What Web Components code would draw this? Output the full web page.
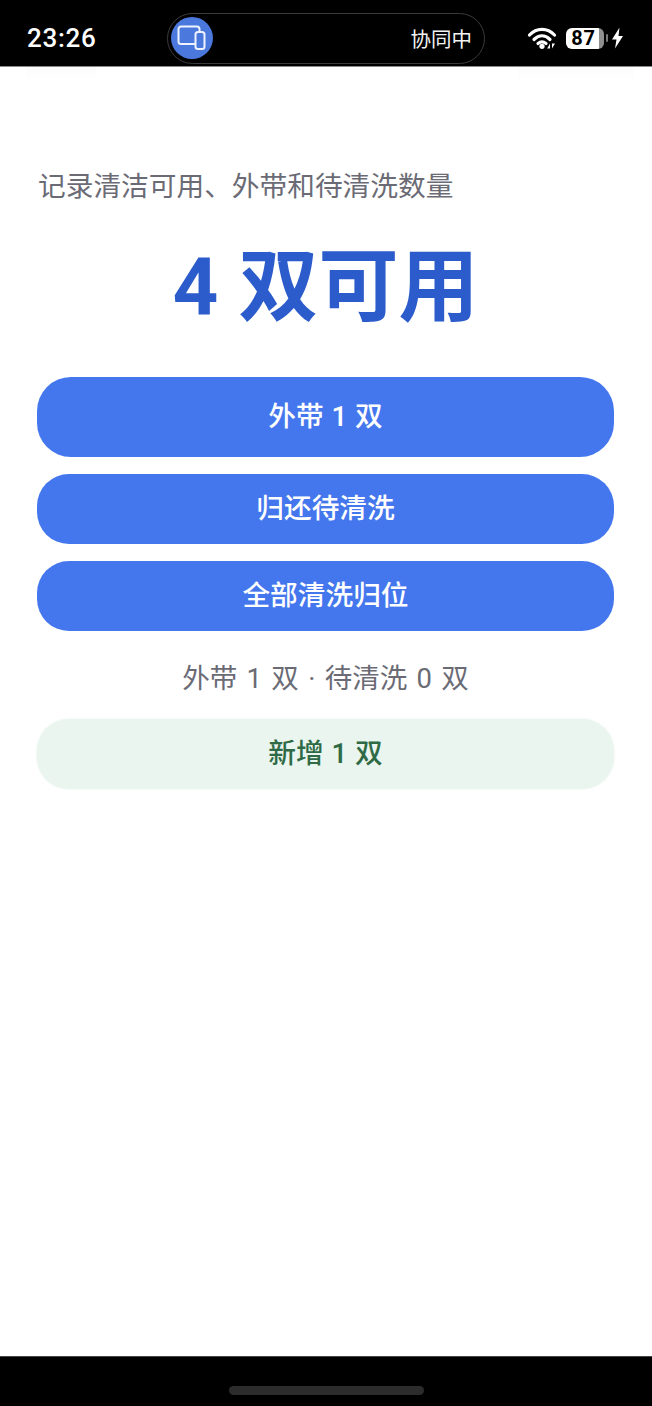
<!DOCTYPE html>
<html lang="zh">
<head>
<meta charset="utf-8">
<title>记录</title>
<style>
  html, body { margin: 0; padding: 0; height: 100%; background: #fff; }
  body { font-family: Roboto, "Noto Sans CJK SC", sans-serif; }
</style>
</head>
<body>
<phone-screen>
  <status-bar slot="top"></status-bar>
  <counter-panel>
    <p-note>记录清洁可用、外带和待清洗数量</p-note>
    <big-count>4 双可用</big-count>
    <pill-button tall>外带 1 双</pill-button>
    <pill-button>归还待清洗</pill-button>
    <pill-button>全部清洗归位</pill-button>
    <p-summary>外带 1 双 · 待清洗 0 双</p-summary>
    <pill-button soft>新增 1 双</pill-button>
  </counter-panel>
  <home-bar slot="bottom"></home-bar>
</phone-screen>

<script>
class PhoneScreen extends HTMLElement {
  constructor() {
    super();
    this.attachShadow({ mode: 'open' }).innerHTML = `
      <style>
        :host { display: flex; flex-direction: column; height: 1406px; background: #fff; overflow: hidden; }
        main { flex: 1; min-height: 0; position: relative; overflow: hidden; }
        .haze { position: absolute; top: 0; height: 14px; background: linear-gradient(#fbfbfc, #fff); }
        .left { left: 26px; width: 70px; }
        .right { left: 518px; width: 116px; }
      </style>
      <slot name="top"></slot>
      <main>
        <div class="haze left"></div>
        <div class="haze right"></div>
        <slot></slot>
      </main>
      <slot name="bottom"></slot>
    `;
  }
}

class StatusBar extends HTMLElement {
  constructor() {
    super();
    this.attachShadow({ mode: 'open' }).innerHTML = `
      <style>
        :host { display: flex; align-items: center; height: 67px; background: #000; color: #fff; border-bottom: 1px solid #8a8a8a; box-sizing: border-box; padding: 10px 0 0 27px; }
        .time { width: 140px; font: 500 26px/1 Roboto, "Noto Sans", sans-serif; letter-spacing: .7px; white-space: nowrap; }
        .capsule { width: 318px; height: 51px; box-sizing: border-box; border: 1px solid #3b3b3b; border-radius: 26px; display: flex; align-items: center; justify-content: space-between; padding: 0 12px 0 3px; }
        .dot { width: 42px; height: 42px; border-radius: 50%; background: #4a78dc; display: flex; align-items: center; justify-content: center; }
        .label { font: 400 20.500px/1 "Noto Sans CJK SC", sans-serif; color: #f2f2f2; white-space: nowrap; }
        .right { display: flex; align-items: center; margin-left: 42px; }
        .batt { width: 38px; height: 21px; border-radius: 6px; background: linear-gradient(90deg, #fff 0 86%, #8f8f8f 86%); color: #000; font: 700 20px/21px Roboto, sans-serif; letter-spacing: .8px; text-align: center; margin-left: 8px; padding-right: 3px; box-sizing: border-box; }
        .nub { width: 2px; height: 8px; background: #777; margin-left: 2px; border-radius: 1px; }
      </style>
      <span class="time">23:26</span>
      <div class="capsule">
        <span class="dot">
          <svg width="30" height="28" viewBox="0 0 30 28" fill="none" stroke="#eef3ff" stroke-width="2">
            <path d="M18 20H4a2.500 2.500 0 0 1-2.500-2.500V5A2.500 2.500 0 0 1 4 2.500h16A2.500 2.500 0 0 1 22.500 5v2"/>
            <rect x="18.500" y="8" width="9" height="17" rx="2.500"/>
          </svg>
        </span>
        <span class="label">协同中</span>
      </div>
      <div class="right">
        <svg width="31" height="22" viewBox="0 0 31 22" fill="none" stroke="#fff" stroke-width="3.200" stroke-linecap="round">
          <path d="M2.500 8C9.500 .5 20.500 .5 27.500 8"/>
          <path d="M7 12.500c5-4.800 11-4.800 16 0"/>
          <path d="M11 16.500c2.500-2 5.500-2 8 0"/>
          <circle cx="15" cy="19.300" r="2.600" fill="#fff" stroke="none"/>
          <path d="M23 21.500v-5l-2.800 5zM25 16.500v5l3-5z" fill="#fff" stroke="none"/>
        </svg>
        <span class="batt">87</span>
        <span class="nub"></span>
        <svg width="13" height="22" viewBox="0 0 13 22" style="margin-left:3px"><path d="M8.500.5 1 12.500h4.500L4 21.500l8-12.500H7.500z" fill="#fff"/></svg>
      </div>
    `;
  }
}

class CounterPanel extends HTMLElement {
  constructor() {
    super();
    this.attachShadow({ mode: 'open' }).innerHTML = `
      <style>
        :host { display: flex; flex-direction: column; padding: 98px 38px 0 37px; }
      </style>
      <slot></slot>
    `;
  }
}

class PNote extends HTMLElement {
  constructor() {
    super();
    this.attachShadow({ mode: 'open' }).innerHTML = `
      <style>
        :host { display: block; font-size: 27.700px; line-height: 44px; color: #6a6b75; padding-left: 1px; white-space: nowrap; }
      </style>
      <slot></slot>
    `;
  }
}

class BigCount extends HTMLElement {
  constructor() {
    super();
    this.attachShadow({ mode: 'open' }).innerHTML = `
      <style>
        :host { display: block; font-size: 80px; font-weight: 700; line-height: 100px; color: #2c5ccb; text-align: center; margin: 28px 0 40px; white-space: nowrap; }
      </style>
      <slot></slot>
    `;
  }
}

class PillButton extends HTMLElement {
  constructor() {
    super();
    this.attachShadow({ mode: 'open' }).innerHTML = `
      <style>
        :host { display: flex; align-items: center; justify-content: center; height: 70px; box-sizing: border-box; padding-bottom: 6px; border-radius: 32px; background: #4477ee; color: #fff; font-size: 27.700px; font-weight: 500; word-spacing: 1px; margin-bottom: 17px; white-space: nowrap; }
        :host([tall]) { height: 80px; border-radius: 34px; }
        :host([soft]) { background: #e9f5ee; box-shadow: 0 0 3px #e9f5ee; color: #2e6a45; margin-bottom: 0; }
      </style>
      <slot></slot>
    `;
  }
}

class PSummary extends HTMLElement {
  constructor() {
    super();
    this.attachShadow({ mode: 'open' }).innerHTML = `
      <style>
        :host { display: block; font-size: 27.500px; line-height: 40px; color: #6a6b75; text-align: center; margin: 11px 0 20px; word-spacing: 2.500px; white-space: nowrap; }
      </style>
      <slot></slot>
    `;
  }
}

class HomeBar extends HTMLElement {
  constructor() {
    super();
    this.attachShadow({ mode: 'open' }).innerHTML = `
      <style>
        :host { display: flex; justify-content: center; height: 50px; box-sizing: border-box; background: #000; border-top: 1px solid #444; padding-top: 29px; }
        i { display: block; width: 195px; height: 9px; border-radius: 5px; background: #2c2c2c; }
      </style>
      <i></i>
    `;
  }
}

customElements.define('phone-screen', PhoneScreen);
customElements.define('status-bar', StatusBar);
customElements.define('counter-panel', CounterPanel);
customElements.define('p-note', PNote);
customElements.define('big-count', BigCount);
customElements.define('pill-button', PillButton);
customElements.define('p-summary', PSummary);
customElements.define('home-bar', HomeBar);
</script>
</body>
</html>
